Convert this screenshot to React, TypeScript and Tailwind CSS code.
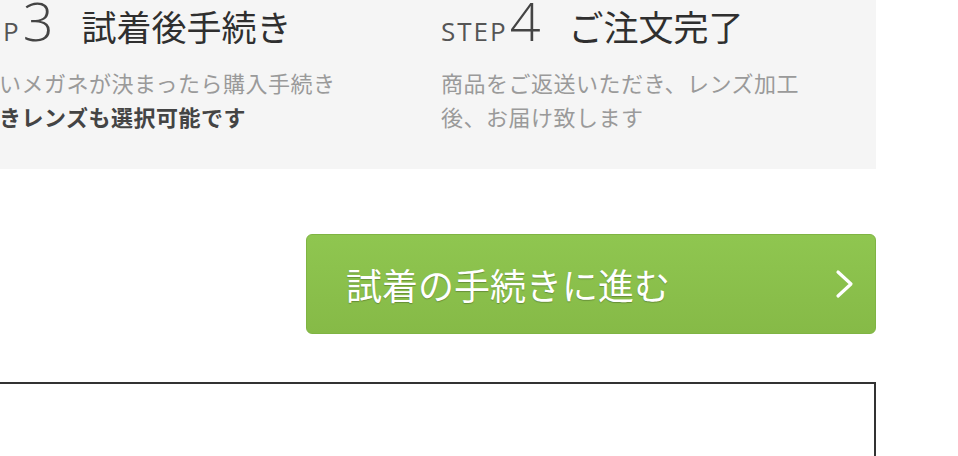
import React from "react";

const jp = { fontFamily: '"Noto Sans CJK JP", "Noto Sans", sans-serif' };
const lat = { fontFamily: '"Open Sans", "Noto Sans", sans-serif' };

function Step({ n, title, children }: { n: string; title: string; children: React.ReactNode }) {
  return (
    <div className="w-[487px] shrink-0">
      <div className="flex items-baseline h-[42px] mt-[-7px]">
        <span style={lat} className="text-[26px] leading-none text-[#555] tracking-[2px]">STEP</span>
        <span style={lat} className="text-[54px] leading-none font-light text-[#444] ml-[2px]">{n}</span>
        <span style={jp} className="text-[35px] leading-none font-normal text-[#2f2f2f] ml-[28px]">{title}</span>
      </div>
      <div style={jp} className="mt-[30px] text-[22px] leading-[34px] tracking-[0.5px] text-[#9a9a9a]">{children}</div>
    </div>
  );
}

export default function App() {
  return (
    <div className="w-[958px] h-[456px] overflow-hidden bg-white">
      <div className="w-[876px] h-[169px] bg-[#f5f5f5] overflow-hidden">
        <div className="flex ml-[-46px]">
          <Step n="3" title="試着後手続き">
            欲しいメガネが決まったら購入手続き
            <br />
            <span className="font-bold text-[#444]">度付きレンズも選択可能です</span>
          </Step>
          <Step n="4" title="ご注文完了">
            商品をご返送いただき、レンズ加工
            <br />
            後、お届け致します
          </Step>
        </div>
      </div>
      <button
        style={jp}
        className="mt-[65px] ml-[306px] w-[570px] h-[100px] rounded-[6px] border border-[#7fb443] bg-gradient-to-b from-[#8fc650] to-[#86ba47] flex items-center justify-between pl-[39px] pr-[20px] text-white"
      >
        <span className="text-[36px] leading-none [text-shadow:0_1px_1px_rgba(0,0,0,0.25)]">試着の手続きに進む</span>
        <svg width="20" height="30" viewBox="0 0 20 30" fill="none">
          <path d="M3 3 L16 15 L3 27" stroke="white" strokeWidth="3.2" strokeLinecap="round" strokeLinejoin="round" />
        </svg>
      </button>
      <div className="mt-[48px] ml-[-10px] w-[886px] h-[200px] border-2 border-[#333]"></div>
    </div>
  );
}
